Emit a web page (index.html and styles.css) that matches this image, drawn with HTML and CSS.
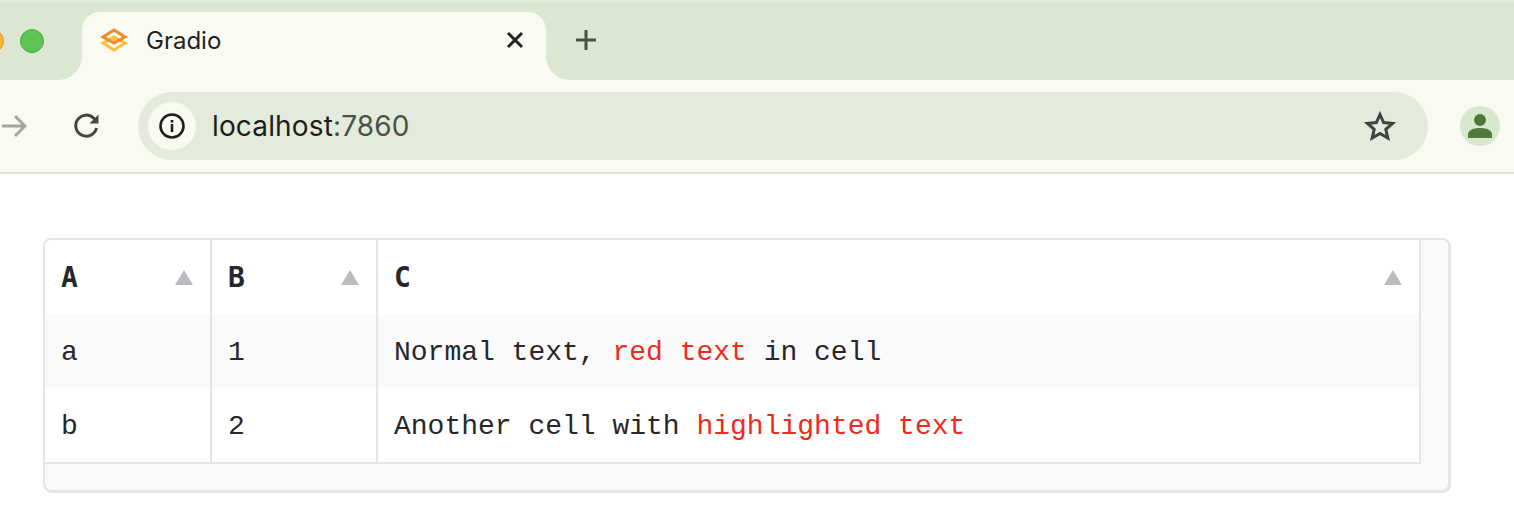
FILE: index.html
```html
<!DOCTYPE html>
<html lang="en">
<head>
    <meta charset="UTF-8">
    <title>Gradio</title>
    <link rel="stylesheet" href="styles.css">
</head>
<body>
    <div class="tabstrip">
        <div class="strip-left">
            <span class="light light-yellow"></span>
            <span class="light light-green"></span>
        </div>
        <div class="tab-slot">
            <div class="tab">
                <svg class="favicon" width="28" height="24" viewBox="0 0 28 24" fill="none" stroke-width="3">
                    <path d="M14 9 L25 15 L14 22 L3 15 Z" stroke="#fbbf3c"/>
                    <path d="M14 2 L25 9 L14 15 L3 9 Z" stroke="#f08a2c"/>
                    <circle cx="14" cy="12" r="1.5" fill="#f8a832" stroke="none"/>
                </svg>
                <span class="tab-title">Gradio</span>
                <svg class="tab-close" width="18" height="18" viewBox="0 0 18 18" fill="none" stroke="#1f2320" stroke-width="3">
                    <path d="M2 2 L16 16 M16 2 L2 16"/>
                </svg>
            </div>
        </div>
        <div class="strip-right">
            <svg width="20" height="20" viewBox="0 0 20 20" fill="none" stroke="#47533f" stroke-width="3">
                <path d="M10 0 V20 M0 10 H20"/>
            </svg>
        </div>
    </div>

    <div class="toolbar">
        <svg class="nav-forward" width="26" height="26" viewBox="0 0 26 26" fill="none" stroke="#a3a7a0" stroke-width="3">
            <path d="M1 13 H24 M14 3 L24 13 L14 23"/>
        </svg>
        <svg class="nav-reload" width="26" height="26" viewBox="0 0 26 26" fill="none" stroke="#3f4a3c" stroke-width="3">
            <path d="M22.5 15 A10.5 10.5 0 1 1 20 5.5 L23 8.5"/>
            <path d="M24.5 1.5 V10.5 H15.5 Z" fill="#3f4a3c" stroke="none"/>
        </svg>
        <div class="omnibox">
            <div class="site-info">
                <svg width="26" height="26" viewBox="0 0 26 26" fill="none">
                    <circle cx="13" cy="13" r="11.5" stroke="#1c1f1b" stroke-width="2.6"/>
                    <rect x="11.7" y="11" width="2.6" height="8" fill="#1c1f1b"/>
                    <rect x="11.7" y="7" width="2.6" height="2.6" fill="#1c1f1b"/>
                </svg>
            </div>
            <span class="url">localhost<span class="url-port">:7860</span></span>
            <svg class="star" width="32" height="30" viewBox="0 0 32 30" fill="none" stroke="#3f4440" stroke-width="3" stroke-linejoin="miter">
                <path d="M16 3.5 L19.6 11.6 L28.6 12.5 L21.8 18.4 L23.8 27 L16 22.5 L8.2 27 L10.2 18.4 L3.4 12.5 L12.4 11.6 Z"/>
            </svg>
        </div>
        <div class="avatar">
            <svg width="26" height="26" viewBox="0 0 26 26" fill="#4f7a3a">
                <circle cx="13" cy="7" r="6"/>
                <path d="M1 25 V21.5 C1 17 7 15 13 15 C19 15 25 17 25 21.5 V25 Z"/>
            </svg>
        </div>
    </div>

    <main class="page">
        <div class="table-wrap">
            <table class="data-table">
                <thead>
                    <tr>
                        <th class="col-a"><div class="th-inner">A<span class="sort"></span></div></th>
                        <th class="col-b"><div class="th-inner">B<span class="sort"></span></div></th>
                        <th><div class="th-inner">C<span class="sort"></span></div></th>
                    </tr>
                </thead>
                <tbody>
                    <tr class="row-odd">
                        <td>a</td>
                        <td>1</td>
                        <td>Normal text, <span class="red">red text</span> in cell</td>
                    </tr>
                    <tr>
                        <td>b</td>
                        <td>2</td>
                        <td>Another cell with <span class="red">highlighted text</span></td>
                    </tr>
                </tbody>
            </table>
        </div>
    </main>
</body>
</html>
```

FILE: styles.css
```css
html, body {
    margin: 0;
    padding: 0;
    background: #fff;
    overflow: hidden;
}
body {
    height: 508px;
    font-family: Inter, "Liberation Sans", sans-serif;
}

/* browser chrome */
.tabstrip {
    display: flex;
    height: 80px;
    background: #f9faf2;
}
.strip-left {
    width: 82px;
    background: #dbe7d0;
    border-top: 2px solid #e4ecdc;
    box-sizing: border-box;
    border-bottom-right-radius: 24px;
    display: flex;
    align-items: center;
    gap: 16px;
    overflow: hidden;
}
.light {
    width: 24px;
    height: 24px;
    border-radius: 50%;
    flex: none;
    box-sizing: border-box;
}
.light-yellow {
    background: #f6b73c;
    border: 1px solid #dc9b2c;
    margin-left: -20px;
}
.light-green {
    background: #5fc454;
    border: 1px solid #4ea845;
}
.tab-slot {
    width: 464px;
    background: #dbe7d0;
    border-top: 2px solid #e4ecdc;
    box-sizing: border-box;
    padding-top: 10px;
}
.tab {
    height: 68px;
    background: #f9faf2;
    border-radius: 18px 18px 0 0;
    display: flex;
    align-items: center;
    padding: 0 22px 12px 18px;
    box-sizing: border-box;
}
.favicon {
    flex: none;
}
.tab-title {
    margin-left: 18px;
    font-size: 24px;
    color: #1f2320;
    flex: 1;
}
.tab-close {
    flex: none;
}
.strip-right {
    flex: 1;
    background: #dbe7d0;
    border-top: 2px solid #e4ecdc;
    box-sizing: border-box;
    border-bottom-left-radius: 24px;
    display: flex;
    align-items: center;
    padding: 0 0 2px 30px;
}

.toolbar {
    height: 94px;
    box-sizing: border-box;
    background: #f9faf2;
    border-bottom: 2px solid #e2e5d6;
    display: flex;
    align-items: center;
}
.nav-forward {
    margin-left: 1px;
    flex: none;
}
.nav-reload {
    margin-left: 47px;
    flex: none;
}
.omnibox {
    margin-left: 38px;
    width: 1290px;
    height: 68px;
    border-radius: 34px;
    background: #e4ebdc;
    display: flex;
    align-items: center;
    padding: 0 32px 0 10px;
    box-sizing: border-box;
}
.site-info {
    width: 48px;
    height: 48px;
    border-radius: 50%;
    background: #f9faf2;
    display: flex;
    align-items: center;
    justify-content: center;
    flex: none;
}
.url {
    margin-left: 16px;
    font-size: 28px;
    letter-spacing: 0.15px;
    color: #1c1f1b;
    flex: 1;
}
.url-port {
    color: #4a5247;
}
.star {
    flex: none;
}
.avatar {
    width: 40px;
    height: 40px;
    margin-left: 32px;
    border-radius: 50%;
    background: #d9e7cf;
    display: flex;
    align-items: center;
    justify-content: center;
    flex: none;
}

/* dataframe */
.page {
    padding: 64px 64px 0 43px;
}
.table-wrap {
    width: 1407px;
    height: 254px;
    box-sizing: border-box;
    border: 2px solid #e5e5e5;
    border-radius: 8px;
    background: #fafafa;
    box-shadow: 1px 1px 0 #e5e5e5;
    overflow: hidden;
}
.data-table {
    width: 1376px;
    table-layout: fixed;
    border-collapse: separate;
    border-spacing: 0;
    font-family: "Liberation Mono", monospace;
    font-size: 28px;
    color: #27272a;
    background: #fff;
    border-right: 2px solid #e5e5e5;
    border-bottom: 2px solid #e5e5e5;
}
.data-table th, .data-table td {
    height: 74px;
    padding: 2px 16px 0;
    box-sizing: border-box;
    text-align: left;
    border-right: 2px solid #e5e5e5;
}
.data-table th:last-child, .data-table td:last-child {
    border-right: none;
}
.col-a {
    width: 167px;
}
.col-b {
    width: 166px;
}
.data-table th {
    padding-top: 0;
    font-family: "DejaVu Sans Mono", monospace;
    font-weight: 700;
    font-size: 28px;
    color: #27272a;
}
.th-inner {
    display: flex;
    align-items: center;
    justify-content: space-between;
}
.sort {
    width: 0;
    height: 0;
    margin-right: 1px;
    border-left: 9px solid transparent;
    border-right: 9px solid transparent;
    border-bottom: 15px solid #bbbbc2;
}
.row-odd td {
    background: #fafafa;
}
.red {
    color: #ef2b1d;
}
```
